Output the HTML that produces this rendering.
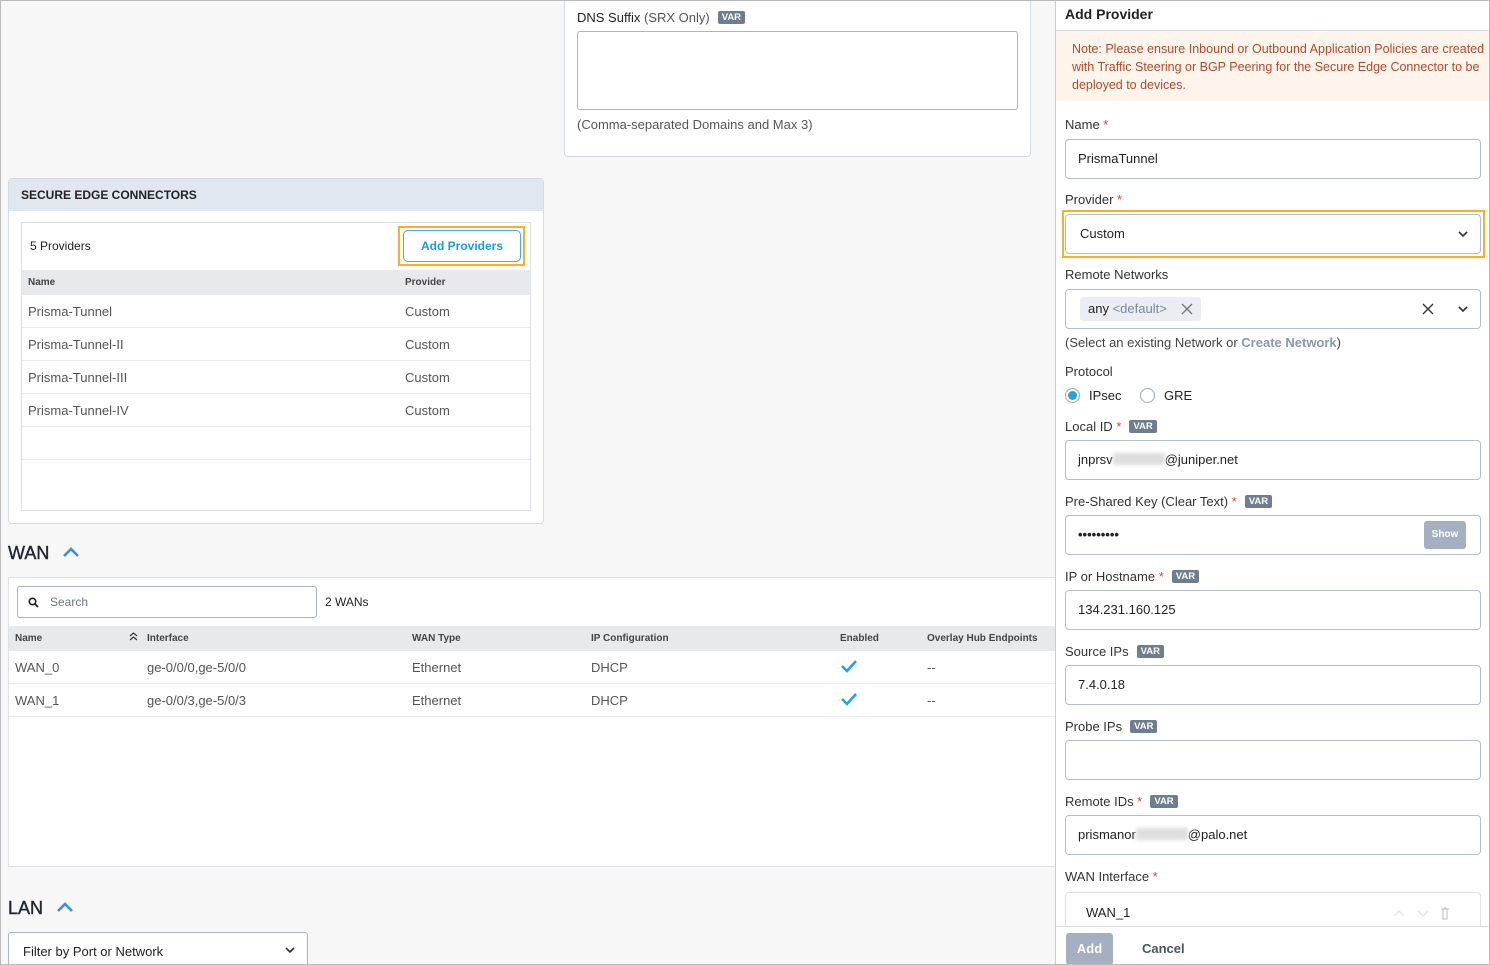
<!DOCTYPE html>
<html><head><meta charset="utf-8"><style>
*{box-sizing:border-box;margin:0;padding:0}
html,body{width:1490px;height:965px;overflow:hidden}
body{background:#f7f7f7;font-family:"Liberation Sans",sans-serif;font-size:13px;color:#333;position:relative}
.a{position:absolute}
.card{position:absolute;background:#fff;border:1px solid #d5dbe3;border-radius:4px}
.var{display:inline-block;background:#6f7d90;color:#fff;font-size:9.5px;font-weight:bold;padding:1px 4px;border-radius:2px;vertical-align:2px;margin-left:8px}
.req{color:#e0403c}
.inp{position:absolute;left:1065px;width:416px;height:40px;border:1px solid #b5bfcc;border-radius:4px;background:#fff;padding-left:12px;line-height:38px;color:#222;font-size:13px}
.lbl{position:absolute;left:1065px;font-size:13px;color:#333}
.th{position:absolute;font-size:10px;font-weight:bold;color:#444}
.td{position:absolute;font-size:13px;color:#555}
.hl{position:absolute;height:1px;background:#e8ebef}
.blur{display:inline-block;width:52px;height:12px;background:#ddd;vertical-align:-1px;filter:blur(2px)}
.h{position:absolute;font-size:18px;color:#1e2430;-webkit-text-stroke:0.4px #1e2430}
</style></head><body>

<div class="card" style="left:564px;top:-4px;width:467px;height:161px"></div>
<div class="a" style="left:577px;top:10px;font-size:13px;color:#222">DNS Suffix <span style="color:#555">(SRX Only)</span><span class="var">VAR</span></div>
<div class="a" style="left:577px;top:31px;width:441px;height:79px;border:1px solid #aab4c2;border-radius:3px;background:#fff"></div>
<div class="a" style="left:577px;top:117px;color:#555">(Comma-separated Domains and Max 3)</div>

<div class="card" style="left:8px;top:178px;width:536px;height:346px;overflow:hidden">
 <div style="height:32px;background:#e1e7ef;padding:9px 12px;font-size:12px;font-weight:bold;color:#222">SECURE EDGE CONNECTORS</div>
</div>
<div class="a" style="left:21px;top:222px;width:510px;height:289px;border:1px solid #dde1e6;background:#fff"></div>
<div class="a" style="left:30px;top:239px;font-size:12px;color:#222">5 Providers</div>
<div class="a" style="left:398px;top:226px;width:127px;height:40px;border:2px solid #f5b12a"></div>
<div class="a" style="left:403px;top:230px;width:118px;height:32px;border:1px solid #4aa8e8;border-radius:5px;color:#1a9be6;font-weight:bold;font-size:12px;text-align:center;line-height:30px">Add Providers</div>
<div class="a" style="left:22px;top:270px;width:508px;height:25px;background:#e8e9eb"></div>
<div class="th" style="left:28px;top:277px">Name</div><div class="th" style="left:405px;top:277px">Provider</div>
<div class="td" style="left:28px;top:304px">Prisma-Tunnel</div><div class="td" style="left:405px;top:304px">Custom</div>
<div class="hl" style="left:22px;top:327px;width:508px"></div>
<div class="td" style="left:28px;top:337px">Prisma-Tunnel-II</div><div class="td" style="left:405px;top:337px">Custom</div>
<div class="hl" style="left:22px;top:360px;width:508px"></div>
<div class="td" style="left:28px;top:370px">Prisma-Tunnel-III</div><div class="td" style="left:405px;top:370px">Custom</div>
<div class="hl" style="left:22px;top:393px;width:508px"></div>
<div class="td" style="left:28px;top:403px">Prisma-Tunnel-IV</div><div class="td" style="left:405px;top:403px">Custom</div>
<div class="hl" style="left:22px;top:426px;width:508px"></div>
<div class="hl" style="left:22px;top:459px;width:508px"></div>

<div class="h" style="left:8px;top:543px">WAN</div>
<svg class="a" style="left:62px;top:547px" width="18" height="12"><path d="M2 9 L9 2 L16 9" stroke="#3d8fdc" stroke-width="2.6" fill="none"/></svg>
<div class="a" style="left:8px;top:577px;width:1050px;height:290px;background:#fff;border:1px solid #dde1e6"></div>
<div class="a" style="left:17px;top:586px;width:300px;height:32px;border:1px solid #aab4c2;border-radius:3px;background:#fff"></div>
<svg class="a" style="left:28px;top:597px" width="11" height="11"><circle cx="4.5" cy="4.5" r="3.2" stroke="#222" stroke-width="1.6" fill="none"/><path d="M7 7 L10 10" stroke="#222" stroke-width="1.8"/></svg>
<div class="a" style="left:50px;top:595px;color:#6b7889;font-size:12px">Search</div>
<div class="a" style="left:325px;top:595px;font-size:12px;color:#222">2 WANs</div>
<div class="a" style="left:9px;top:626px;width:1046px;height:25px;background:#e8e9eb"></div>
<div class="th" style="left:15px;top:633px">Name</div>
<svg class="a" style="left:129px;top:632px" width="9" height="9"><path d="M1 4 L4.5 1 L8 4 M1 8 L4.5 5 L8 8" stroke="#333" stroke-width="1.2" fill="none"/></svg>
<div class="th" style="left:147px;top:633px">Interface</div><div class="th" style="left:412px;top:633px">WAN Type</div>
<div class="th" style="left:591px;top:633px">IP Configuration</div><div class="th" style="left:840px;top:633px">Enabled</div>
<div class="th" style="left:927px;top:633px">Overlay Hub Endpoints</div>
<div class="td" style="left:15px;top:660px">WAN_0</div><div class="td" style="left:147px;top:660px">ge-0/0/0,ge-5/0/0</div><div class="td" style="left:412px;top:660px">Ethernet</div><div class="td" style="left:591px;top:660px">DHCP</div><div class="td" style="left:927px;top:660px">--</div>
<div class="hl" style="left:9px;top:683px;width:1046px"></div>
<div class="td" style="left:15px;top:693px">WAN_1</div><div class="td" style="left:147px;top:693px">ge-0/0/3,ge-5/0/3</div><div class="td" style="left:412px;top:693px">Ethernet</div><div class="td" style="left:591px;top:693px">DHCP</div><div class="td" style="left:927px;top:693px">--</div>
<div class="hl" style="left:9px;top:716px;width:1046px"></div>
<svg class="a" style="left:840px;top:659px" width="18" height="14"><path d="M2 7 L7 12 L16 2" stroke="#1fa3ea" stroke-width="2.6" fill="none"/></svg>
<svg class="a" style="left:840px;top:692px" width="18" height="14"><path d="M2 7 L7 12 L16 2" stroke="#1fa3ea" stroke-width="2.6" fill="none"/></svg>

<div class="h" style="left:8px;top:898px">LAN</div>
<svg class="a" style="left:56px;top:902px" width="18" height="12"><path d="M2 9 L9 2 L16 9" stroke="#3d8fdc" stroke-width="2.6" fill="none"/></svg>
<div class="a" style="left:8px;top:932px;width:300px;height:33px;border:1px solid #aab4c2;border-bottom:none;border-radius:3px 3px 0 0;background:#fff;padding:11px 14px;font-size:13px;color:#222">Filter by Port or Network</div>
<svg class="a" style="left:285px;top:947px" width="10" height="7"><path d="M1 1 L5 5 L9 1" stroke="#333" stroke-width="1.6" fill="none"/></svg>

<div class="a" style="left:1055px;top:0;width:435px;height:965px;background:#fff;border-left:1px solid #ccc"></div>
<div class="a" style="left:1065px;top:6px;font-size:14px;font-weight:bold;color:#222">Add Provider</div>
<div class="a" style="left:1056px;top:30px;width:434px;height:1px;background:#ddd"></div>
<div class="a" style="left:1056px;top:31px;width:434px;height:70px;background:#fdf5eb"></div>
<div class="a" style="left:1072px;top:40px;width:420px;font-size:12.5px;line-height:18px;color:#b04a2e">Note: Please ensure Inbound or Outbound Application Policies are created with Traffic Steering or BGP Peering for the Secure Edge Connector to be deployed to devices.</div>

<div class="lbl" style="top:117px">Name <span class="req">*</span></div>
<div class="inp" style="top:139px">PrismaTunnel</div>
<div class="lbl" style="top:192px">Provider <span class="req">*</span></div>
<div class="a" style="left:1062px;top:210px;width:423px;height:48px;border:2px solid #f5b12a"></div>
<div class="inp" style="top:214px;padding-left:14px">Custom</div>
<svg class="a" style="left:1458px;top:231px" width="10" height="7"><path d="M1 1 L5 5 L9 1" stroke="#333" stroke-width="1.6" fill="none"/></svg>
<div class="lbl" style="top:267px">Remote Networks</div>
<div class="inp" style="top:289px"></div>
<div class="a" style="left:1080px;top:297px;width:121px;height:24px;background:#eaeef3;border-radius:3px;padding:4px 8px;font-size:13px;color:#222">any <span style="color:#7b8899">&lt;default&gt;</span></div>
<svg class="a" style="left:1181px;top:303px" width="12" height="12"><path d="M1 1 L11 11 M11 1 L1 11" stroke="#777" stroke-width="1.4"/></svg>
<svg class="a" style="left:1422px;top:303px" width="12" height="12"><path d="M1 1 L11 11 M11 1 L1 11" stroke="#333" stroke-width="1.4"/></svg>
<svg class="a" style="left:1458px;top:306px" width="10" height="7"><path d="M1 1 L5 5 L9 1" stroke="#333" stroke-width="1.6" fill="none"/></svg>
<div class="lbl" style="top:335px;color:#444">(Select an existing Network or <b style="color:#8898ae">Create Network</b>)</div>
<div class="lbl" style="top:364px">Protocol</div>
<div class="a" style="left:1065px;top:388px;width:15px;height:15px;border-radius:50%;border:1px solid #9aa6b5;background:#fff"><div style="margin:2px;width:9px;height:9px;border-radius:50%;background:#1fa3ea"></div></div>
<div class="a" style="left:1089px;top:388px;color:#222">IPsec</div>
<div class="a" style="left:1140px;top:388px;width:15px;height:15px;border-radius:50%;border:1px solid #9aa6b5;background:#fff"></div>
<div class="a" style="left:1164px;top:388px;color:#222">GRE</div>
<div class="lbl" style="top:419px">Local ID <span class="req">*</span><span class="var">VAR</span></div>
<div class="inp" style="top:440px">jnprsv<span class="blur"></span>@juniper.net</div>
<div class="lbl" style="top:494px">Pre-Shared Key (Clear Text) <span class="req">*</span><span class="var">VAR</span></div>
<div class="inp" style="top:515px;font-weight:bold;letter-spacing:0">•••••••••</div>
<div class="a" style="left:1424px;top:521px;width:42px;height:28px;background:#a4b0c2;border-radius:3px;color:#fff;font-size:10px;font-weight:bold;text-align:center;line-height:28px">Show</div>
<div class="lbl" style="top:569px">IP or Hostname <span class="req">*</span><span class="var">VAR</span></div>
<div class="inp" style="top:590px">134.231.160.125</div>
<div class="lbl" style="top:644px">Source IPs<span class="var">VAR</span></div>
<div class="inp" style="top:665px">7.4.0.18</div>
<div class="lbl" style="top:719px">Probe IPs<span class="var">VAR</span></div>
<div class="inp" style="top:740px"></div>
<div class="lbl" style="top:794px">Remote IDs <span class="req">*</span><span class="var">VAR</span></div>
<div class="inp" style="top:815px">prismanor<span class="blur"></span>@palo.net</div>
<div class="lbl" style="top:869px">WAN Interface <span class="req">*</span></div>
<div class="a" style="left:1065px;top:892px;width:416px;height:40px;border:1px solid #dde1e6;border-radius:4px"></div>
<div class="a" style="left:1086px;top:905px;font-size:13px;color:#222">WAN_1</div>
<svg class="a" style="left:1393px;top:909px" width="40" height="8"><path d="M1 7 L6 2 L11 7 M25 2 L30 7 L35 2" stroke="#e3e6ea" stroke-width="1.4" fill="none"/></svg>
<svg class="a" style="left:1440px;top:907px" width="10" height="13"><path d="M1 2 H9 M3 2 V12 H7 V2 M4 1 H6" stroke="#bbb" stroke-width="1" fill="none"/></svg>
<div class="a" style="left:1056px;top:926px;width:434px;height:39px;background:#fff;border-top:1px solid #ddd"></div>
<div class="a" style="left:1066px;top:933px;width:47px;height:32px;background:#a4b0c2;border-radius:3px;color:#fff;font-weight:bold;text-align:center;line-height:32px">Add</div>
<div class="a" style="left:1142px;top:941px;font-weight:bold;color:#4a5566">Cancel</div>
<div class="a" style="left:0;top:0;width:1490px;height:965px;border:1px solid #bbb;pointer-events:none"></div>
</body></html>
